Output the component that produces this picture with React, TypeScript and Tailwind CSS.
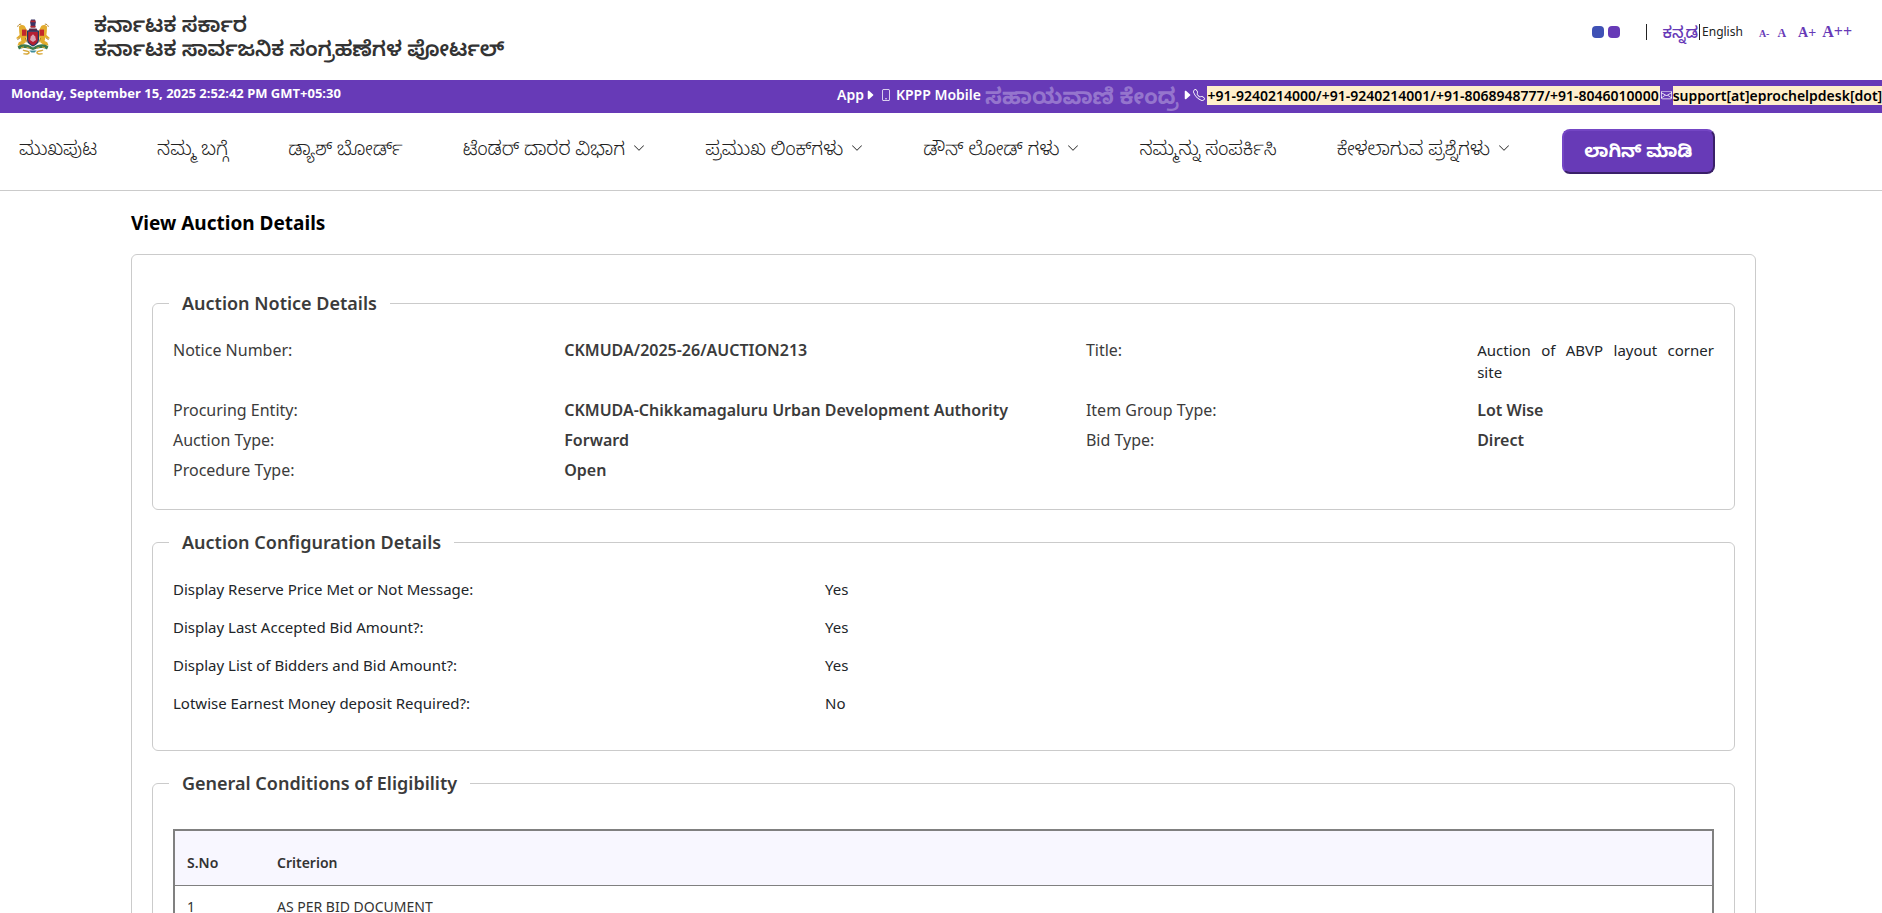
import { useState } from "react";
import { BsCaretRightFill, BsChevronDown, BsEnvelope, BsPhone, BsTelephone } from "react-icons/bs";

interface NavItem {
  label: string;
  menu?: boolean;
}

interface Detail {
  label: string;
  value: string;
  plain?: boolean;
}

const navItems: NavItem[] = [
  { label: "ಮುಖಪುಟ" },
  { label: "ನಮ್ಮ ಬಗ್ಗೆ" },
  { label: "ಡ್ಯಾಶ್ ಬೋರ್ಡ್" },
  { label: "ಟೆಂಡರ್ ದಾರರ ವಿಭಾಗ", menu: true },
  { label: "ಪ್ರಮುಖ ಲಿಂಕ್‌ಗಳು", menu: true },
  { label: "ಡೌನ್ ಲೋಡ್ ಗಳು", menu: true },
  { label: "ನಮ್ಮನ್ನು ಸಂಪರ್ಕಿಸಿ" },
  { label: "ಕೇಳಲಾಗುವ ಪ್ರಶ್ನೆಗಳು", menu: true },
];

const phones = ["+91-9240214000", "+91-9240214001", "+91-8068948777", "+91-8046010000"];

const noticeRows: Detail[][] = [
  [
    { label: "Notice Number:", value: "CKMUDA/2025-26/AUCTION213" },
    { label: "Title:", value: "Auction of ABVP layout corner site", plain: true },
  ],
  [
    { label: "Procuring Entity:", value: "CKMUDA-Chikkamagaluru Urban Development Authority" },
    { label: "Item Group Type:", value: "Lot Wise" },
  ],
  [
    { label: "Auction Type:", value: "Forward" },
    { label: "Bid Type:", value: "Direct" },
  ],
  [{ label: "Procedure Type:", value: "Open" }],
];

const configRows: Detail[] = [
  { label: "Display Reserve Price Met or Not Message:", value: "Yes" },
  { label: "Display Last Accepted Bid Amount?:", value: "Yes" },
  { label: "Display List of Bidders and Bid Amount?:", value: "Yes" },
  { label: "Lotwise Earnest Money deposit Required?:", value: "No" },
];

const criteria = ["AS PER BID DOCUMENT"];

// State emblem: two gajakesari lions holding a shield under the Ashoka capital
function Emblem() {
  return (
    <svg viewBox="0 0 34 38" className="h-[38px] w-[34px]" role="img" aria-label="Karnataka emblem">
      <path d="M15 1.5h4l.8 3-.8 5h-4l-.8-5z" fill="#3a3566" />
      <path d="M14.6 3.4h4.8M14.4 8.6h5.2" stroke="#b3262e" strokeWidth="1.6" />
      <path d="M13.4 10.5h7.2l1.2 2.6H12.2z" fill="#5a2b4a" />
      {[false, true].map((flip) => (
        <g key={String(flip)} transform={flip ? "translate(34 0) scale(-1 1)" : undefined}>
          <path d="M3 8.5c2.6-2.4 5.4-1.4 6.4.8l2.4 4.6-.6 3.4-1.6 7.2-3.6 2.6-4.6.4 1.4-3.2 2.6-1.2-.8-3.6-3.8 1.6-.4-1.4 3.2-2.6-.4-3.6z" fill="#e3ac2e" />
          <path d="M6 11.6h4.4v6.2H6z" fill="#c3272b" />
          <path d="M1.6 8.8c.6-1.8 2-3 3.6-2.6M1.4 21.6l2.4-1.4M9.4 20l1.8 4.6" stroke="#a97618" strokeWidth=".9" fill="none" />
          <path d="M1.6 28.6c4.2-3.4 9.4-2.8 15.4.8v2.6c-5-2.4-9.8-2.8-14-.6z" fill="#3c7a4c" />
          <path d="M5 29.6l3-.6M10.6 29.4l3 .9" stroke="#d8a83a" strokeWidth="1" fill="none" />
          <path d="M7 32c2.2 1.6 4.8.4 5.8 2s-1.8 2.6-5.4 1.6" stroke="#d8a83a" strokeWidth="1.5" fill="none" />
        </g>
      ))}
      <path d="M11.6 13.2h10.8v8.4c0 3.2-2.6 5.2-5.4 6.4-2.8-1.2-5.4-3.2-5.4-6.4z" fill="#b51f33" stroke="#1f3a63" strokeWidth="1.2" />
      <path d="M17 16.2l2.2 2.2.8 3.6-3 2-3-2 .8-3.6z" fill="#d9a3b4" />
      <path d="M13.4 32.4h7.2l-2 2h-3.2z" fill="#3f8d9a" />
    </svg>
  );
}

function Section({ title, children }: { title: string; children: React.ReactNode }) {
  return (
    <fieldset className="mb-5 min-w-0 rounded-md border border-[#cbcbcb] px-5 pb-5">
      <legend className="-ml-1 px-[13px] text-lg leading-6 font-semibold text-[#3b3b3b]">{title}</legend>
      {children}
    </fieldset>
  );
}

function Header() {
  const [lang, setLang] = useState("kn");

  return (
    <header className="flex h-20 items-start justify-between pr-[30px] pl-4">
      <div className="flex">
        <div className="mt-[18px]">
          <Emblem />
        </div>
        <div className="mt-3 ml-11 text-[21px] leading-6 font-semibold text-[#333]">
          <p>ಕರ್ನಾಟಕ ಸರ್ಕಾರ</p>
          <p>ಕರ್ನಾಟಕ ಸಾರ್ವಜನಿಕ ಸಂಗ್ರಹಣೆಗಳ ಪೋರ್ಟಲ್</p>
        </div>
      </div>
      <div className="mt-5 flex h-6 items-center text-xs">
        <button aria-label="Blue theme" className="h-3 w-3 rounded bg-[#3f51b5]" />
        <button aria-label="Purple theme" className="ml-1 h-3 w-3 rounded bg-[#673ab7]" />
        <span className="ml-[26px] h-4 w-px bg-[#222]" />
        <button
          onClick={() => setLang("kn")}
          className={lang === "kn" ? "ml-4 text-base font-medium text-[#673ab7]" : "ml-4 text-base"}
        >
          ಕನ್ನಡ
        </button>
        <span className="ml-px h-4 w-px bg-[#222]" />
        <button onClick={() => setLang("en")} className={lang === "en" ? "ml-0.5 font-semibold text-[#673ab7]" : "ml-0.5 text-[#222]"}>
          English
        </button>
        <div className="ml-4 flex items-baseline font-['Liberation_Serif',serif] font-bold text-[#673ab7]">
          <button className="text-[10px]">A-</button>
          <button className="ml-2 text-xs">A</button>
          <button className="ml-3 text-sm">A+</button>
          <button className="ml-1.5 text-base">A++</button>
        </div>
      </div>
    </header>
  );
}

function Ticker() {
  return (
    <div className="flex h-[33px] items-start justify-between overflow-hidden bg-[#673ab7] text-[13px] leading-[26px] font-bold text-white">
      <p className="pl-[11px] whitespace-nowrap">Monday, September 15, 2025 2:52:42 PM GMT+05:30</p>
      <div className="w-[1045px] shrink-0 pt-0.5">
        <div className="flex items-center text-sm leading-[26px] font-semibold whitespace-nowrap">
          <span>App</span>
          <BsCaretRightFill className="h-3 w-3 shrink-0" />
          <BsPhone className="mx-1 h-[14px] w-3 shrink-0" />
          <span>KPPP Mobile</span>
          <span className="ml-1 text-[22px] leading-6 font-bold text-[#9575cd]">ಸಹಾಯವಾಣಿ ಕೇಂದ್ರ</span>
          <BsCaretRightFill className="ml-0.5 h-3 w-3 shrink-0" />
          <BsTelephone className="mr-0.5 h-3 w-3 shrink-0" />
          <span className="flex bg-[#ffefcc] px-px leading-[19px] text-black">
            {phones.map((phone, i) => (
              <a key={phone} href={`tel:${phone}`}>
                {i > 0 && "/"}
                {phone}
              </a>
            ))}
          </span>
          <BsEnvelope className="mx-px h-3 w-[11px] shrink-0" />
          <a href="#support" className="bg-[#ffefcc] leading-[19px] text-black">
            support[at]eprochelpdesk[dot]com
          </a>
        </div>
      </div>
    </div>
  );
}

function Nav() {
  return (
    <nav className="flex h-[78px] items-start border-b border-[#cbcbcb] pt-4 pl-[19px] text-[19px] whitespace-nowrap text-[#222]">
      <ul className="flex items-center gap-[60px] leading-[38px] font-light">
        {navItems.map((item) => (
          <li key={item.label}>
            <a href="#" className="flex items-center">
              {item.label}
              {item.menu && <BsChevronDown className="ml-2 h-3 w-3" />}
            </a>
          </li>
        ))}
      </ul>
      <button className="ml-[52px] h-[45px] w-[153px] rounded-lg border-2 border-t-[#7446c4] border-r-[#3a2069] border-b-[#3a2069] border-l-[#7446c4] bg-[#673ab7] pb-1 text-lg font-bold text-white">
        ಲಾಗಿನ್ ಮಾಡಿ
      </button>
    </nav>
  );
}

export default function App() {
  return (
    <div className="h-screen overflow-hidden bg-white font-['Noto_Sans','Noto_Sans_Kannada',sans-serif] text-[#212529]">
      <Header />
      <Ticker />
      <Nav />
      <main className="mr-[126px] ml-[131px] pt-[18px]">
        <h1 className="text-[19px] leading-7 font-bold text-black">View Auction Details</h1>
        <div className="mt-[17px] rounded-md border border-[#cbcbcb] px-5 pt-9">
          <Section title="Auction Notice Details">
            <dl className="-mr-6 pt-6 leading-[22px] text-[#3b3b3b]">
              {noticeRows.map((row) => (
                <div key={row[0].label} className="grid grid-cols-12">
                  {row.map((d, i) => (
                    <div key={d.label} className={i === 0 ? "col-span-7 grid grid-cols-7" : "col-span-5 grid grid-cols-5"}>
                      <dt className="col-span-3 pb-2">{d.label}</dt>
                      {d.plain ? (
                        <dd className="col-span-2 pr-6 pb-4 text-justify text-[15px] text-[#212529]">{d.value}</dd>
                      ) : (
                        <dd className={i === 0 ? "col-span-4 pb-2 font-semibold" : "col-span-2 pb-2 font-semibold"}>{d.value}</dd>
                      )}
                    </div>
                  ))}
                </div>
              ))}
            </dl>
          </Section>
          <Section title="Auction Configuration Details">
            <dl className="-mr-6 pt-6 text-[15px] leading-[22px]">
              {configRows.map((d) => (
                <div key={d.label} className="grid grid-cols-12 pb-4">
                  <dt className="col-span-5">{d.label}</dt>
                  <dd className="col-span-7">{d.value}</dd>
                </div>
              ))}
            </dl>
          </Section>
          <Section title="General Conditions of Eligibility">
            <table className="mt-[34px] w-full border-2 border-[#808080] text-left text-sm text-[#333]">
              <thead>
                <tr className="h-[55px] border-b border-[#808080] bg-[#f8f7ff]">
                  <th className="w-[91px] pt-[10px] pl-3 font-semibold">S.No</th>
                  <th className="pt-[10px] pl-3 font-semibold">Criterion</th>
                </tr>
              </thead>
              <tbody>
                {criteria.map((text, i) => (
                  <tr key={text} className="h-11">
                    <td className="pl-3">{i + 1}</td>
                    <td className="pl-3">{text}</td>
                  </tr>
                ))}
              </tbody>
            </table>
          </Section>
        </div>
      </main>
    </div>
  );
}
